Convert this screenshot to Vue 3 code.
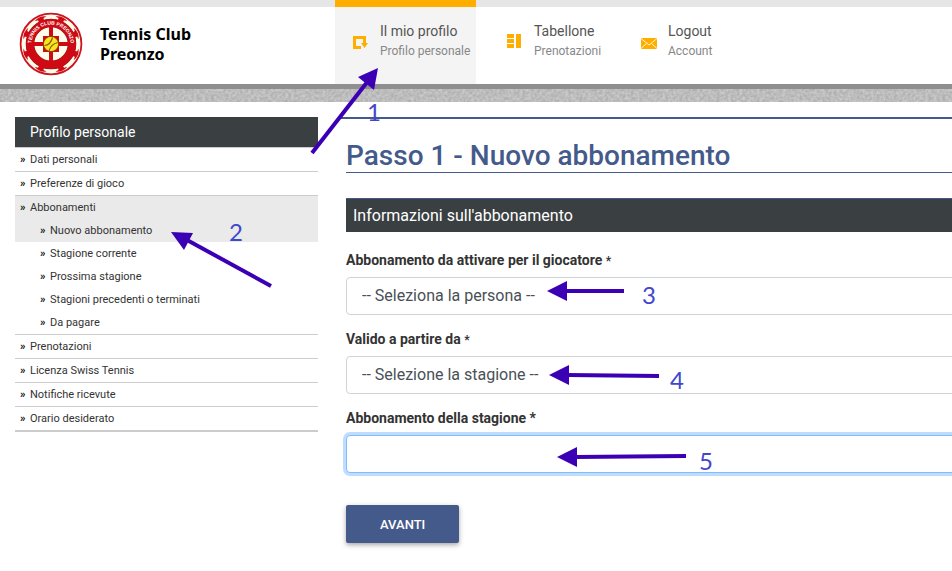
<script setup>
import { ref } from 'vue'

const navItems = [
  { icon: 'profile', title: 'Il mio profilo', sub: 'Profilo personale', active: true },
  { icon: 'board', title: 'Tabellone', sub: 'Prenotazioni' },
  { icon: 'mail', title: 'Logout', sub: 'Account' },
]

const menu = [
  { label: 'Dati personali' },
  { label: 'Preferenze di gioco' },
  {
    label: 'Abbonamenti',
    active: true,
    children: [
      { label: 'Nuovo abbonamento', active: true },
      { label: 'Stagione corrente' },
      { label: 'Prossima stagione' },
      { label: 'Stagioni precedenti o terminati' },
      { label: 'Da pagare' },
    ],
  },
  { label: 'Prenotazioni' },
  { label: 'Licenza Swiss Tennis' },
  { label: 'Notifiche ricevute' },
  { label: 'Orario desiderato' },
]

const player = ref('')
const season = ref('')
const subscription = ref('')

// Steps of the guide, drawn over the page
const steps = [
  { n: 1, line: [312, 153, 368, 81], head: '378,68 358,77 374,90', x: 367, y: 121 },
  { n: 2, line: [271, 286, 187, 240], head: '171,232 193,233 184,250', x: 229, y: 241 },
  { n: 3, line: [624, 291, 565, 291], head: '547,291 567,281 567,301', x: 642, y: 304 },
  { n: 4, line: [659, 376, 567, 375], head: '549,375 569,365 569,385', x: 670, y: 389 },
  { n: 5, line: [686, 456, 575, 457], head: '557,457 577,447 577,467', x: 699, y: 470 },
]
</script>

<template>
  <div class="page">
    <header class="header">
      <a href="#" class="brand">
        <svg class="logo" viewBox="0 0 64 64" aria-hidden="true">
          <defs>
            <path id="ring-text" d="M14.5 41 A19.6 19.6 0 1 1 49.5 41" />
          </defs>
          <circle cx="32" cy="32" r="30.4" fill="#fdfbea" stroke="#cb1420" stroke-width="1.8" />
          <circle cx="32" cy="32" r="21" fill="none" stroke="#7a2a1c" stroke-width="8.6" />
          <circle cx="32" cy="32" r="21" fill="none" stroke="#cf0a14" stroke-width="7.8" />
          <g fill="#cf0a14">
            <path
              v-for="a in 8"
              :key="a"
              :transform="`rotate(${a * 45 - 22.5} 32 32)`"
              d="M28 9 Q30 7.5 29 5 L25.6 4.8 Q32 1.2 38.4 4.8 L35 5 Q34 7.5 36 9 Z"
            />
            <rect x="30" y="15" width="4" height="34" />
            <rect x="15" y="30" width="34" height="4" />
            <rect x="24" y="24" width="16" height="16" />
          </g>
          <circle cx="32" cy="32" r="7.6" fill="#f6e51c" stroke="#7b3a10" stroke-width="0.8" />
          <path
            d="M25.5 33.5 Q31.5 33 33.5 25.5 M30 38.8 Q32 32 38.8 30.5"
            fill="none" stroke="#8a5a12" stroke-width="1.2"
          />
          <text class="logo-text">
            <textPath href="#ring-text" startOffset="50%" text-anchor="middle">TENNIS CLUB PREONZO</textPath>
          </text>
        </svg>
        <span class="club">Tennis Club<br>Preonzo</span>
      </a>
      <nav class="nav">
        <a v-for="item in navItems" :key="item.title" href="#" class="nav-item" :class="{ active: item.active }">
          <svg v-if="item.icon === 'profile'" class="nav-icon" viewBox="0 0 16 16">
            <path d="M0 2 H13 V9 H15 L11.5 14 L8 9 H10 V5 H3 V12 H8 V15 H0 Z" fill="#ffae00" />
          </svg>
          <svg v-else-if="item.icon === 'board'" class="nav-icon" viewBox="0 0 16 16">
            <path d="M0 0 H7 V4 H0 Z M0 5 H7 V9 H0 Z M0 10 H7 V14 H0 Z M9 0 H14 V14 H9 Z" fill="#ffae00" />
          </svg>
          <svg v-else class="nav-icon" viewBox="0 0 16 16">
            <rect y="4" width="16" height="11" fill="#ffae00" />
            <path d="M0 4.5 L8 11 L16 4.5 M0 14.5 L5.5 9.5 M16 14.5 L10.5 9.5" fill="none" stroke="#fff4cf" />
          </svg>
          <span class="nav-text">
            <span class="nav-title">{{ item.title }}</span>
            <span class="nav-sub">{{ item.sub }}</span>
          </span>
        </a>
      </nav>
    </header>

    <svg class="strip" aria-hidden="true">
      <filter id="grain" x="0" y="0" width="100%" height="100%" color-interpolation-filters="sRGB">
        <feTurbulence type="fractalNoise" baseFrequency="0.35" numOctaves="2" seed="4" />
        <feColorMatrix values="0.2 0 0 0 0.64  0.2 0 0 0 0.64  0.2 0 0 0 0.64  0 0 0 0 1" />
      </filter>
      <rect width="100%" height="100%" filter="url(#grain)" />
    </svg>

    <div class="content">
      <aside class="sidebar">
        <h2>Profilo personale</h2>
        <ul class="menu">
          <li v-for="entry in menu" :key="entry.label">
            <a href="#" :class="{ current: entry.active }">{{ entry.label }}</a>
            <ul v-if="entry.children" class="submenu">
              <li v-for="child in entry.children" :key="child.label">
                <a href="#" :class="{ current: child.active }">{{ child.label }}</a>
              </li>
            </ul>
          </li>
        </ul>
      </aside>

      <main class="main">
        <h1>Passo 1 - Nuovo abbonamento</h1>
        <form @submit.prevent>
          <h3>Informazioni sull'abbonamento</h3>
          <div class="field">
            <label for="player">Abbonamento da attivare per il giocatore <small>*</small></label>
            <select id="player" v-model="player">
              <option value="">-- Seleziona la persona --</option>
            </select>
          </div>
          <div class="field">
            <label for="season">Valido a partire da <small>*</small></label>
            <select id="season" v-model="season">
              <option value="">-- Selezione la stagione --</option>
            </select>
          </div>
          <div class="field">
            <label for="subscription">Abbonamento della stagione *</label>
            <select id="subscription" v-model="subscription" class="focused">
              <option value=""></option>
            </select>
          </div>
          <button type="submit">AVANTI</button>
        </form>
      </main>
    </div>

    <svg class="guide" aria-hidden="true">
      <g v-for="s in steps" :key="s.n">
        <line :x1="s.line[0]" :y1="s.line[1]" :x2="s.line[2]" :y2="s.line[3]" />
        <polygon :points="s.head" />
        <text :x="s.x" :y="s.y">{{ s.n }}</text>
      </g>
    </svg>
  </div>
</template>

<style>
body {
  background: #fff;
}
</style>

<style scoped>
* {
  box-sizing: border-box;
}

.page {
  position: relative;
  overflow: hidden;
  padding-bottom: 28px;
  font-family: Roboto, Arial, sans-serif;
  color: #333;
}

a {
  text-decoration: none;
  color: inherit;
}

h1, h2, h3, ul {
  margin: 0;
  padding: 0;
  font-weight: 400;
  list-style: none;
}

.header {
  display: flex;
  border-bottom: 5px solid #8f8f8f;
  background: linear-gradient(#e6e6e6 7px, #fff 7px);
}

.brand {
  display: flex;
  align-items: center;
  gap: 17px;
  flex: 0 0 335px;
  padding: 7px 0 4px 19px;
}

.logo {
  width: 64px;
  height: 64px;
}

.logo-text {
  font: bold 5px "Liberation Sans", Arial, sans-serif;
  fill: #fff;
}

.club {
  font: bold 16px/20px "Noto Sans", "Segoe UI", sans-serif;
  color: #000;
}

.nav {
  display: flex;
  gap: 13px;
}

.nav-item {
  display: flex;
  align-items: flex-start;
  gap: 11px;
  min-width: 121px;
  height: 84px;
  padding: 21px 3px 0 18px;
  border-top: 0 solid #ffae00;
}

.nav-item.active {
  min-width: 141px;
  padding-top: 14px;
  border-top-width: 7px;
  background: #f4f4f4;
}

.nav-icon {
  width: 16px;
  height: 16px;
  margin-top: 13px;
}

.nav-text {
  display: flex;
  flex-direction: column;
}

.nav-title {
  font-size: 14px;
  line-height: 20px;
  color: #555;
}

.nav-sub {
  font-size: 12px;
  line-height: 20px;
  color: #888;
}

.strip {
  display: block;
  width: 100%;
  height: 13px;
  background: #bbb;
}

.content {
  display: flex;
  align-items: flex-start;
  gap: 20px;
  padding: 15px 0 0 15px;
}

.sidebar {
  flex: 0 0 303px;
}

.sidebar h2 {
  padding-left: 15px;
  background: #3a3f41;
  color: #fff;
  font-size: 14px;
  line-height: 30px;
}

.menu {
  border-bottom: 2px solid #ccc;
}

.menu > li {
  border-top: 1px solid #ccc;
}

.menu a {
  display: flex;
  padding-left: 5px;
  font-size: 11px;
  line-height: 23px;
}

.menu a::before {
  content: "»";
  width: 10px;
  font-weight: 700;
  color: #111;
}

.menu .submenu a {
  padding-left: 25px;
}

.menu a.current {
  background: #eaeaea;
}

.main {
  flex: 1;
  margin-right: -16px;
  padding: 20px 0 0 8px;
  border-top: 2px solid #445a8b;
}

h1 {
  border-bottom: 1px solid #445a8b;
  color: #445a8b;
  font-size: 28px;
  font-weight: 500;
  line-height: 33px;
}

h3 {
  margin: 25px 0 17px;
  padding-left: 7px;
  border-top: 1px solid #445a8b;
  background: #3a3f41;
  color: #fff;
  font-size: 16px;
  line-height: 33px;
}

.field {
  margin-bottom: 13px;
}

label {
  display: block;
  margin-bottom: 6px;
  font-size: 14px;
  font-weight: 700;
  line-height: 22px;
}

label small {
  font-size: 12px;
  line-height: 1;
}

select {
  display: block;
  width: 100%;
  height: 38px;
  padding: 0 15px 2px;
  appearance: none;
  border: 1px solid #ced4da;
  border-radius: 4px;
  background: #fff;
  color: #495057;
  font: 16px Roboto, Arial, sans-serif;
}

select.focused,
select:focus {
  outline: 0;
  border-color: #80bdff;
  box-shadow: 0 0 0 3px rgba(0, 123, 255, 0.25);
}

button {
  display: block;
  height: 38px;
  margin-top: 32px;
  padding: 0 34px;
  border: 0;
  border-radius: 2px;
  background: #445a8b;
  box-shadow: 0 2px 5px rgba(0, 0, 0, 0.35);
  color: #fff;
  font: 500 13px Roboto, Arial, sans-serif;
  cursor: pointer;
}

.guide {
  position: absolute;
  inset: 0;
  width: 100%;
  height: 100%;
  pointer-events: none;
}

.guide line {
  stroke: #3c00b4;
  stroke-width: 4;
}

.guide polygon {
  fill: #3c00b4;
}

.guide text {
  fill: #3f48cc;
  font: 24px Lato, Calibri, sans-serif;
}
</style>
